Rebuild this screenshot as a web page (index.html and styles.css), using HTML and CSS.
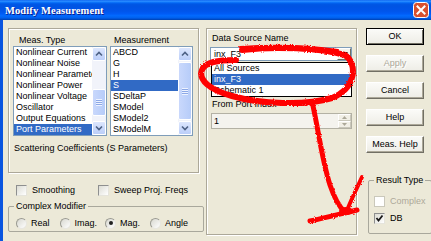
FILE: index.html
```html
<!DOCTYPE html>
<html lang="en">
<head>
    <meta charset="UTF-8">
    <title>Modify Measurement</title>
    <link rel="stylesheet" href="styles.css">
</head>
<body>
    <div class="window">
        <!-- Title bar -->
        <div class="titlebar">
            <span class="title">Modify Measurement</span>
            <span class="close">
                <svg width="16" height="16" viewBox="0 0 16 16">
                    <rect x="0.5" y="0.5" width="15" height="15" rx="3" fill="#D9512F" stroke="#fff"/>
                    <path d="M4.5 4.5 L11.5 11.5 M11.5 4.5 L4.5 11.5" stroke="#fff" stroke-width="2" stroke-linecap="square"/>
                </svg>
            </span>
        </div>

        <div class="client">
            <!-- Left column -->
            <div class="col-left">
                <div class="etched meas-box">
                    <div class="list-heads">
                        <span class="head head-type">Meas. Type</span>
                        <span class="head head-meas">Measurement</span>
                    </div>
                    <div class="lists">
                        <div class="listbox list-type">
                            <ul class="items">
                                <li>Nonlinear Current</li>
                                <li>Nonlinear Noise</li>
                                <li>Nonlinear Parameters</li>
                                <li>Nonlinear Power</li>
                                <li>Nonlinear Voltage</li>
                                <li>Oscillator</li>
                                <li>Output Equations</li>
                                <li class="selected">Port Parameters</li>
                            </ul>
                            <div class="scrollbar">
                                <div class="sb-btn"><svg width="12" height="12" viewBox="0 0 12 12"><path d="M3 7.5 L6 4.5 L9 7.5" fill="none" stroke="#4D6185" stroke-width="1.6"/></svg></div>
                                <div class="sb-space space-type"></div>
                                <div class="sb-thumb thumb-type"><span class="grip"></span></div>
                                <div class="sb-space"></div>
                                <div class="sb-btn"><svg width="12" height="12" viewBox="0 0 12 12"><path d="M3 4.5 L6 7.5 L9 4.5" fill="none" stroke="#4D6185" stroke-width="1.6"/></svg></div>
                            </div>
                        </div>
                        <div class="listbox list-meas">
                            <ul class="items">
                                <li>ABCD</li>
                                <li>G</li>
                                <li>H</li>
                                <li class="selected">S</li>
                                <li>SDeltaP</li>
                                <li>SModel</li>
                                <li>SModel2</li>
                                <li>SModelM</li>
                            </ul>
                            <div class="scrollbar">
                                <div class="sb-btn"><svg width="12" height="12" viewBox="0 0 12 12"><path d="M3 7.5 L6 4.5 L9 7.5" fill="none" stroke="#4D6185" stroke-width="1.6"/></svg></div>
                                <div class="sb-space space-meas"></div>
                                <div class="sb-thumb thumb-meas"><span class="grip"></span></div>
                                <div class="sb-space"></div>
                                <div class="sb-btn"><svg width="12" height="12" viewBox="0 0 12 12"><path d="M3 4.5 L6 7.5 L9 4.5" fill="none" stroke="#4D6185" stroke-width="1.6"/></svg></div>
                            </div>
                        </div>
                    </div>
                    <p class="desc">Scattering Coefficients (S Parameters)</p>
                </div>

                <div class="checks">
                    <label class="check"><span class="box"></span>Smoothing</label>
                    <label class="check check-sweep"><span class="box"></span>Sweep Proj. Freqs</label>
                </div>

                <fieldset class="group complex">
                    <legend>Complex Modifier</legend>
                    <div class="radios">
                        <label class="radio"><span class="dot"></span>Real</label>
                        <label class="radio"><span class="dot"></span>Imag.</label>
                        <label class="radio"><span class="dot on"></span>Mag.</label>
                        <label class="radio"><span class="dot"></span>Angle</label>
                    </div>
                </fieldset>
            </div>

            <!-- Data source -->
            <div class="etched source-box">
                <div class="field-label">Data Source Name</div>
                <div class="combo">
                    <span class="combo-text">inx_F3</span>
                    <span class="combo-btn"><svg width="7" height="4" viewBox="0 0 7 4"><path d="M0 0 H7 L3.5 4 Z" fill="#000"/></svg></span>
                </div>
                <ul class="dropdown">
                    <li>All Sources</li>
                    <li class="selected">inx_F3</li>
                    <li>Schematic 1</li>
                </ul>
                <div class="field-label port-label">From Port Index</div>
                <div class="spin">
                    <span class="spin-text">1</span>
                    <span class="spin-btns">
                        <span class="spin-btn"><svg width="5" height="3" viewBox="0 0 5 3"><path d="M0 3 H5 L2.5 0 Z" fill="#ACA899"/></svg></span>
                        <span class="spin-btn"><svg width="5" height="3" viewBox="0 0 5 3"><path d="M0 0 H5 L2.5 3 Z" fill="#ACA899"/></svg></span>
                    </span>
                </div>
            </div>

            <!-- Buttons -->
            <div class="col-right">
                <div class="btn btn-default">OK</div>
                <div class="btn disabled">Apply</div>
                <div class="btn">Cancel</div>
                <div class="btn">Help</div>
                <div class="btn">Meas. Help</div>

                <fieldset class="group result">
                    <legend>Result Type</legend>
                    <label class="check disabled"><span class="box"></span>Complex</label>
                    <label class="check check-db"><span class="box checked"><svg width="9" height="9" viewBox="0 0 9 9"><path d="M1.5 4 L3.5 6.5 L7.5 1.5" fill="none" stroke="#1a1a1a" stroke-width="1.8"/></svg></span>DB</label>
                </fieldset>
            </div>
        </div>

        <!-- Red marker annotation drawn over the dialog -->
        <svg class="scribble" width="431" height="241" viewBox="0 0 431 241">
            <defs>
                <filter id="spray" x="-5%" y="-5%" width="110%" height="110%">
                    <feTurbulence type="fractalNoise" baseFrequency="0.9" numOctaves="1" seed="3"/>
                    <feDisplacementMap in="SourceGraphic" scale="3"/>
                </filter>
            </defs>
            <g fill="none" stroke="#F00" stroke-linecap="round" stroke-linejoin="round" filter="url(#spray)">
                <path stroke-width="6" d="M242 50 C275 46 320 48 345 55 C358 64 356 88 332 98 C305 106 260 104 232 96 C210 90 198 80 202 70 C205 62 218 60 236 60"/>
                <path stroke-width="2" d="M240 47 C270 45 305 45 338 50"/>
                <path stroke-width="5" d="M313 106 C318 128 322 160 330 185 C335 200 339 207 345 212"/>
                <path stroke-width="5" d="M310 221 C325 218 340 214 357 210"/>
                <path stroke-width="4" d="M348 208 C352 198 357 188 362 177"/>
            </g>
            <ellipse cx="346" cy="211" rx="7" ry="4" fill="#F00"/>
        </svg>
    </div>
</body>
</html>
```

FILE: styles.css
```css
* {
    margin: 0;
    padding: 0;
    box-sizing: border-box;
}

body {
    font-family: "Liberation Sans", Arial, sans-serif;
    font-size: 9px;
    color: #000;
    background: #ECE9D8;
    overflow: hidden;
}

ul {
    list-style: none;
}

.window {
    position: relative;
    width: 431px;
    height: 241px;
    overflow: hidden;
    background: #ECE9D8;
}

/* Title bar */
.titlebar {
    height: 20px;
    display: flex;
    align-items: center;
    justify-content: space-between;
    padding: 0 2px 0 5px;
    background: linear-gradient(to bottom, #0058EE 0%, #3593FF 5%, #127DFF 10%, #0262EE 16%, #0057E5 22%, #0054E3 30%, #0055EB 56%, #005BF5 68%, #026AFE 78%, #0062EF 88%, #0052D6 94%, #0040AB 100%);
}

.title {
    font-family: "Liberation Serif", "Times New Roman", serif;
    font-weight: bold;
    font-size: 10.5px;
    color: #fff;
    text-shadow: 1px 1px 0 #0A1E8C;
    letter-spacing: 0.1px;
}

.close {
    display: flex;
    width: 16px;
    height: 16px;
}

/* Dialog client area */
.client {
    display: flex;
    height: 221px;
    padding: 8px 0 0 5px;
    border-left: 3px solid #0A55E0;
}

.etched {
    border: 1px solid #ACA899;
    box-shadow: 1px 1px 0 #fff, inset 1px 1px 0 #fff;
}

.col-left {
    width: 191px;
    margin-right: 7px;
}

.meas-box {
    height: 145px;
    padding: 6px 5px 0 4px;
}

.list-heads {
    display: flex;
    height: 10px;
    line-height: 10px;
}

.head-type {
    width: 97px;
    padding-left: 6px;
}

.head-meas {
    padding-left: 4px;
}

.lists {
    display: flex;
    gap: 3px;
    margin-top: 1px;
}

.listbox {
    display: flex;
    height: 90px;
    border: 1px solid #7F9DB9;
    background: #fff;
}

.list-type {
    width: 94px;
}

.list-meas {
    width: 83px;
}

.items {
    flex: 1;
    overflow: hidden;
}

.items li {
    height: 11px;
    line-height: 11px;
    padding-left: 2px;
    white-space: nowrap;
}

.items li.selected,
.dropdown li.selected {
    background: #316AC5;
    color: #fff;
}

/* XP scrollbar */
.scrollbar {
    width: 14px;
    display: flex;
    flex-direction: column;
    background: #F1F3FA;
}

.sb-btn {
    height: 14px;
    display: flex;
    align-items: center;
    justify-content: center;
    border: 1px solid #fff;
    border-radius: 2px;
    background: linear-gradient(to bottom, #DCE6FD, #BBCEF9);
}

.sb-space {
    flex: 1;
}

.space-type {
    flex: none;
    height: 28px;
}

.space-meas {
    flex: none;
    height: 1px;
}

.sb-thumb {
    display: flex;
    align-items: center;
    justify-content: center;
    border: 1px solid #fff;
    border-radius: 2px;
    background: linear-gradient(to right, #C9D8FC, #B6CCF9);
}

.thumb-type {
    height: 27px;
}

.thumb-meas {
    height: 58px;
}

.grip {
    width: 6px;
    height: 7px;
    background: repeating-linear-gradient(to bottom, #EEF3FF 0, #EEF3FF 1px, #8CA8E6 1px, #8CA8E6 2px);
}

.desc {
    margin-top: 7px;
    line-height: 10px;
    padding-left: 1px;
}

/* Checkboxes and radios */
.checks {
    display: flex;
    margin-top: 11px;
    padding-left: 8px;
}

.check {
    display: flex;
    align-items: center;
    height: 12px;
    line-height: 12px;
}

.check-sweep {
    margin-left: 23px;
}

.box {
    display: flex;
    align-items: center;
    justify-content: center;
    width: 11px;
    height: 11px;
    margin-right: 5px;
    border: 1px solid #8E8F8F;
    border-right-color: #E5E4DC;
    border-bottom-color: #E5E4DC;
    background: linear-gradient(135deg, #DCDCD4, #FFFFFF);
}

.check.disabled {
    color: #ACA899;
}

.check.disabled .box {
    border-color: #CAC8BB;
    background: #fff;
}

.group {
    border: 1px solid #A9A89C;
    border-radius: 2px;
    padding: 0 5px;
}

.group legend {
    padding: 0 2px;
    line-height: 10px;
}

.complex {
    margin-top: 5px;
    height: 31px;
}

.radios {
    display: flex;
    margin-top: 6px;
    padding-left: 2px;
}

.radio {
    display: flex;
    align-items: center;
    height: 12px;
    margin-right: 10px;
}

.radio:nth-child(2) {
    margin-right: 8px;
}

.dot {
    display: flex;
    align-items: center;
    justify-content: center;
    width: 11px;
    height: 11px;
    margin-right: 4px;
    border-radius: 50%;
    border: 1px solid #9A9A92;
    border-right-color: #E8E7E0;
    border-bottom-color: #E8E7E0;
    background: linear-gradient(135deg, #D8D8D0, #FFFFFF);
}

.dot.on::after {
    content: "";
    width: 4px;
    height: 4px;
    border-radius: 50%;
    background: #222;
}

/* Data source panel */
.source-box {
    width: 151px;
    height: 207px;
    padding: 4px 4px 0 3px;
    margin-right: 9px;
}

.field-label {
    line-height: 10px;
    padding-left: 2px;
}

.combo {
    display: flex;
    align-items: center;
    height: 14px;
    margin-top: 4px;
    border: 1px solid #7F9DB9;
    background: #fff;
}

.combo-text {
    flex: 1;
    padding-left: 3px;
}

.combo-btn {
    display: flex;
    align-items: center;
    justify-content: center;
    width: 14px;
    height: 12px;
    border: 1px solid;
    border-color: #fff #716F64 #716F64 #fff;
    background: #F3F2EC;
}

.dropdown {
    margin: 1px 0 0 1px;
    border: 1px solid #000;
    background: #fff;
}

.dropdown li {
    height: 11px;
    line-height: 11px;
    padding-left: 2px;
}

.port-label {
    margin-top: 2px;
}

.spin {
    display: flex;
    align-items: center;
    height: 16px;
    margin: 4px 0 0 1px;
    border: 1px solid #B3B1A4;
    background: #F4F3EE;
}

.spin-text {
    flex: 1;
    padding-left: 2px;
}

.spin-btns {
    display: flex;
    flex-direction: column;
    width: 13px;
    height: 14px;
}

.spin-btn {
    display: flex;
    align-items: center;
    justify-content: center;
    height: 7px;
    border: 1px solid;
    border-color: #fff #C9C7BA #C9C7BA #fff;
    background: #F1EFE6;
}

/* Buttons column */
.col-right {
    width: 61px;
    display: flex;
    flex-direction: column;
}

.btn {
    width: 58px;
    height: 17px;
    line-height: 15px;
    text-align: center;
    margin-bottom: 10px;
    border: 1px solid;
    border-color: #fff #716F64 #716F64 #fff;
    box-shadow: inset -1px -1px 0 #ACA899;
    background: linear-gradient(to bottom, #FBFBF8, #EEEDE6);
}

.btn-default {
    border-color: #000;
    box-shadow: inset 1px 1px 0 #fff, inset -1px -1px 0 #716F64;
}

.btn.disabled {
    color: #ACA899;
    text-shadow: 1px 1px 0 #fff;
}

.result {
    margin: 12px 0 0 2px;
    width: 59px;
    height: 59px;
}

.result .check {
    margin-top: 10px;
}

.result .check-db {
    margin-top: 5px;
}

/* Annotation overlay */
.scribble {
    position: absolute;
    left: 0;
    top: 0;
    pointer-events: none;
}
```
